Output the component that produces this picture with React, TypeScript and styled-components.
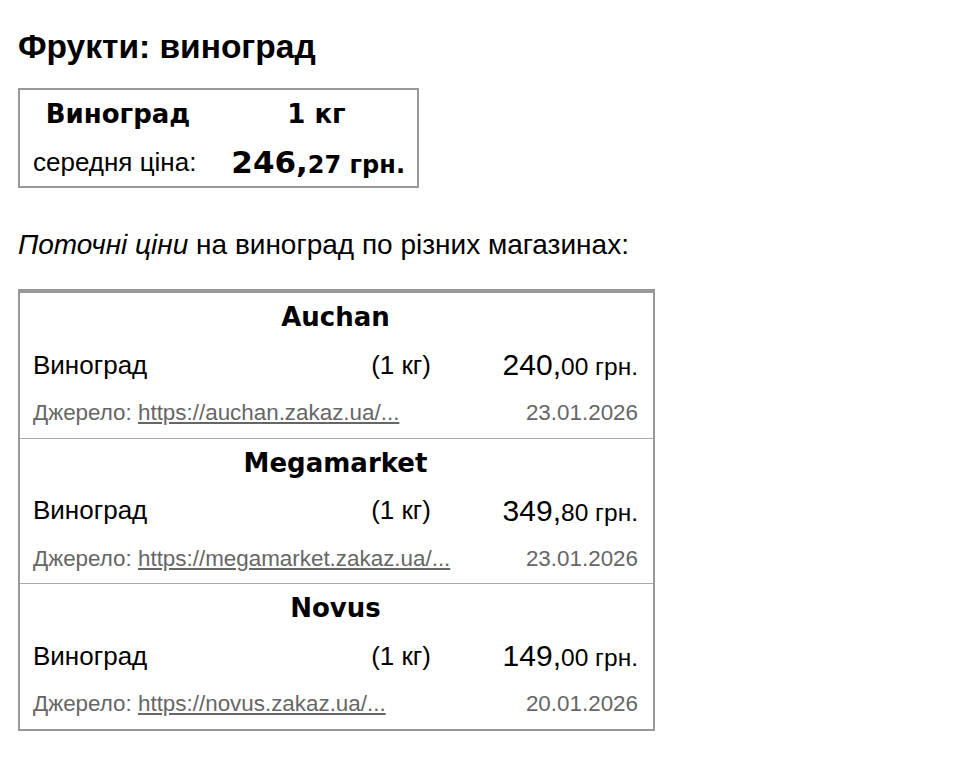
import React from "react";
import styled, { createGlobalStyle } from "styled-components";

const stores = [
  {
    name: "Auchan",
    item: "Виноград",
    unit: "(1 кг)",
    whole: "240",
    cents: "00",
    url: "https://auchan.zakaz.ua/...",
    date: "23.01.2026",
  },
  {
    name: "Megamarket",
    item: "Виноград",
    unit: "(1 кг)",
    whole: "349",
    cents: "80",
    url: "https://megamarket.zakaz.ua/...",
    date: "23.01.2026",
  },
  {
    name: "Novus",
    item: "Виноград",
    unit: "(1 кг)",
    whole: "149",
    cents: "00",
    url: "https://novus.zakaz.ua/...",
    date: "20.01.2026",
  },
];

const GlobalStyle = createGlobalStyle`
  body {
    margin: 0;
    background: #fff;
    color: #000;
    font-family: "Liberation Sans", Arial, sans-serif;
  }
`;

const App: React.FC = () => (
  <>
    <GlobalStyle />
    <StyledPage>
      <StyledTitle>Фрукти: виноград</StyledTitle>

      <StyledSummary>
        <StyledSummaryHead>Виноград</StyledSummaryHead>
        <StyledSummaryHead>1 кг</StyledSummaryHead>
        <StyledSummaryLabel>середня ціна:</StyledSummaryLabel>
        <StyledSummaryPrice>
          <span>
            246,<small>27 грн.</small>
          </span>
        </StyledSummaryPrice>
      </StyledSummary>

      <StyledIntro>
        <em>Поточні ціни</em> на виноград по різних магазинах:
      </StyledIntro>

      <StyledStores>
        {stores.map((store) => (
          <StyledStore key={store.name}>
            <StyledStoreName>{store.name}</StyledStoreName>
            <StyledItemRow>
              <span>{store.item}</span>
              <span>{store.unit}</span>
              <StyledPrice>
                {store.whole},<small>{store.cents} грн.</small>
              </StyledPrice>
            </StyledItemRow>
            <StyledSource>
              <span>
                Джерело: <a href="#">{store.url}</a>
              </span>
              <span>{store.date}</span>
            </StyledSource>
          </StyledStore>
        ))}
      </StyledStores>
    </StyledPage>
  </>
);

const StyledPage = styled.div`
  padding: 27px 18px;
`;

const StyledTitle = styled.h1`
  margin: 0 0 21px;
  font-size: 33.5px;
  line-height: 40px;
  font-weight: 700;
`;

const StyledSummary = styled.div`
  display: grid;
  grid-template-columns: 196px 201px;
  grid-auto-rows: 48px;
  width: fit-content;
  border: 2px solid #999;
`;

const StyledSummaryHead = styled.div`
  display: flex;
  align-items: center;
  justify-content: center;
  font-family: "DejaVu Sans", Verdana, sans-serif;
  font-weight: 700;
  font-size: 26px;
`;

const StyledSummaryLabel = styled.div`
  display: flex;
  align-items: center;
  padding-left: 13px;
  font-size: 26px;
`;

const StyledSummaryPrice = styled.div`
  display: flex;
  align-items: center;
  justify-content: flex-end;
  padding-right: 12px;
  font-family: "DejaVu Sans", Verdana, sans-serif;
  font-weight: 700;
  font-size: 31px;

  small {
    font-size: 24px;
  }
`;

const StyledIntro = styled.p`
  margin: 40px 0 27px;
  font-size: 28px;
  line-height: 34px;
`;

const StyledStores = styled.div`
  width: 633px;
  border: 2px solid #999;
  border-top-width: 4px;
`;

const StyledStore = styled.div`
  padding: 0 15px 0 13px;

  & + & {
    border-top: 1px solid #aaa;
  }
`;

const StyledStoreName = styled.div`
  height: 48px;
  display: flex;
  align-items: center;
  justify-content: center;
  font-family: "DejaVu Sans", Verdana, sans-serif;
  font-weight: 700;
  font-size: 26px;
`;

const StyledItemRow = styled.div`
  display: grid;
  grid-template-columns: 1fr auto 207px;
  align-items: center;
  height: 48px;
  font-size: 26px;

  & > :last-child {
    justify-self: end;
  }
`;

const StyledPrice = styled.span`
  font-size: 30px;

  small {
    font-size: 24.5px;
  }
`;

const StyledSource = styled.div`
  display: flex;
  justify-content: space-between;
  align-items: center;
  height: 48.5px;
  color: #666;
  font-size: 22.4px;

  a {
    color: #666;
    text-decoration: underline;
  }
`;

export default App;
